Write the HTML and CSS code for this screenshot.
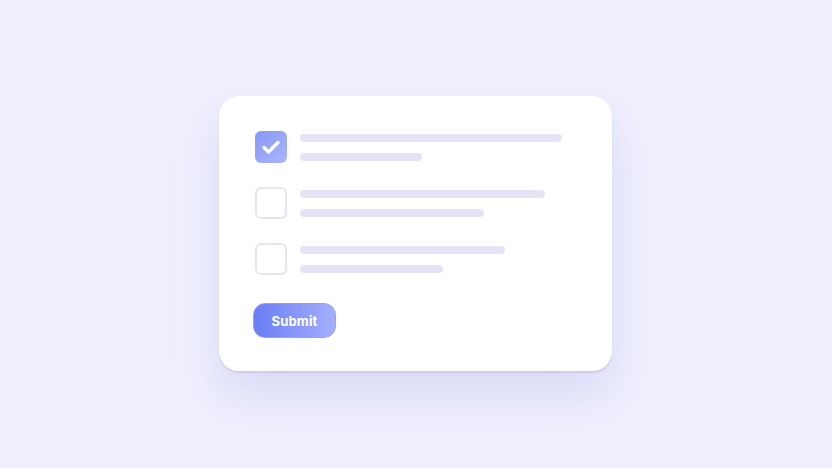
FILE: index.html
```html
<!DOCTYPE html>
<html lang="en">
<head>
<meta charset="utf-8">
<title>Checklist</title>
<link rel="stylesheet" href="styles.css">
</head>
<body>
<main class="stage">
  <section class="card">
    <ul class="tasks">
      <li class="task">
        <span class="box box-checked">
          <svg viewBox="0 0 32 32" width="32" height="32" aria-hidden="true">
            <path d="M9 16.5l4.5 4.5L23 11.5" fill="none" stroke="#fff" stroke-width="3.4" stroke-linecap="round" stroke-linejoin="round"/>
          </svg>
        </span>
        <span class="lines">
          <span class="line" style="width:262px"></span>
          <span class="line" style="width:122px"></span>
        </span>
      </li>
      <li class="task">
        <span class="box"></span>
        <span class="lines">
          <span class="line" style="width:245px"></span>
          <span class="line" style="width:184px"></span>
        </span>
      </li>
      <li class="task">
        <span class="box"></span>
        <span class="lines">
          <span class="line" style="width:205px"></span>
          <span class="line" style="width:143px"></span>
        </span>
      </li>
    </ul>
    <button class="submit" type="button">Submit</button>
  </section>
</main>
</body>
</html>
```

FILE: styles.css
```css
* { box-sizing: border-box; }

html, body {
  margin: 0;
  height: 100%;
}

body {
  background: #efeffd;
  font-family: "Inter", "Liberation Sans", sans-serif;
}

.stage {
  height: 468px;
  display: flex;
  justify-content: center;
  align-items: flex-start;
  padding: 96px 1px 0 0;
}

.card {
  width: 393px;
  height: 275px;
  background: #fff;
  border-radius: 20px;
  padding: 35px 36px 0 34px;
  box-shadow:
    0 1.5px 1.5px rgba(185, 170, 205, 0.4),
    0 24px 44px rgba(195, 200, 242, 0.5);
}

.tasks {
  list-style: none;
  margin: 0;
  padding: 0 0 0 2px;
  display: flex;
  flex-direction: column;
  gap: 24px;
}

.task {
  display: flex;
  align-items: flex-start;
  gap: 13px;
  height: 32px;
}

.box {
  width: 32px;
  height: 32px;
  flex: none;
  border-radius: 6px;
  border: 2px solid #e4e4f8;
  background: #fff;
}

.box-checked {
  border: none;
  background: linear-gradient(135deg, #8797f4, #aab6fb);
}

.box svg { display: block; }

.lines {
  display: flex;
  flex-direction: column;
  gap: 11px;
  padding-top: 3px;
}

.line {
  display: block;
  height: 8px;
  border-radius: 4px;
  background: #e4e4f6;
}

.submit {
  margin-top: 28px;
  width: 83px;
  height: 35px;
  border: 1px solid #93a0f7;
  border-radius: 12px;
  background: linear-gradient(90deg, #6a7ef5, #a3aefb);
  color: #fff;
  font-family: "Inter", "Liberation Sans", sans-serif;
  font-weight: 700;
  font-size: 13px;
  letter-spacing: 0.2px;
  cursor: pointer;
}
```
